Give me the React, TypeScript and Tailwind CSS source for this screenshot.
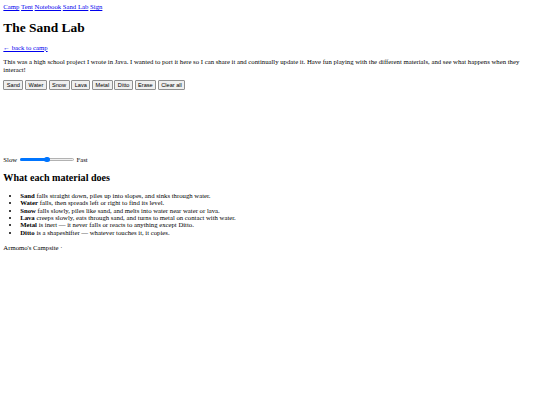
export default function App() {
  const items: [string, string][] = [
    ["Sand", "falls straight down, piles up into slopes, and sinks through water."],
    ["Water", "falls, then spreads left or right to find its level."],
    ["Snow", "falls slowly, piles like sand, and melts into water near water or lava."],
    ["Lava", "creeps slowly, eats through sand, and turns to metal on contact with water."],
    ["Metal", "is inert — it never falls or reacts to anything except Ditto."],
    ["Ditto", "is a shapeshifter — whatever touches it, it copies."],
  ];
  const buttons = ["Sand", "Water", "Snow", "Lava", "Metal", "Ditto", "Erase", "Clear all"];

  return (
    <div className="min-h-[405px] bg-white p-[3.36px] font-['Liberation_Serif',serif] text-[6.72px] leading-[1.15] text-black">
      <nav className="flex gap-[1.68px] text-[#0000ee]">
        <a className="underline" href="#">Camp</a>
        <a className="underline" href="#">Tent</a>
        <a className="underline" href="#">Notebook</a>
        <a className="underline" href="#">Sand Lab</a>
        <a className="underline" href="#">Sign</a>
      </nav>

      <h1 className="my-[8.5px] text-[13.44px] font-bold">The Sand Lab</h1>

      <p className="my-[6.72px]">
        <a className="text-[#0000ee] underline" href="#">← back to camp</a>
      </p>

      <p className="my-[6.72px]">
        This was a high school project I wrote in Java. I wanted to port it here so I can share it and
        continually update it. Have fun playing with the different materials, and see what happens when
        they interact!
      </p>

      <div className="flex gap-[1.68px]">
        {buttons.map((b) => (
          <button
            key={b}
            className="rounded-[1px] border border-[#8f8f8f] bg-[#efefef] px-[2.5px] py-[0.5px] font-['Liberation_Sans',sans-serif] text-[5.6px] leading-[1.15] text-black"
          >
            {b}
          </button>
        ))}
      </div>

      {/* canvas */}
      <div className="h-[66px] w-[126px]" />

      <div className="flex items-center gap-[1.68px]">
        <span>Slow</span>
        <div className="relative mx-[1px] flex h-[7px] w-[54px] items-center">
          <div className="h-[2.5px] w-full rounded-full border border-[#b2b2b2] bg-[#efefef]" />
          <div className="absolute left-0 h-[2.5px] w-[28px] rounded-full bg-[#0075ff]" />
          <div className="absolute left-[24.5px] h-[5.5px] w-[5.5px] rounded-full bg-[#0075ff]" />
        </div>
        <span>Fast</span>
      </div>

      <h2 className="mt-[9px] mb-[8px] text-[10.08px] font-bold">What each material does</h2>

      <ul className="my-[6px] list-disc pl-[16.8px] leading-[1.1]">
        {items.map(([name, rest]) => (
          <li key={name}>
            <b>{name}</b> {rest}
          </li>
        ))}
      </ul>

      <footer className="mt-[8px]">Armomo's Campsite ·</footer>
    </div>
  );
}
